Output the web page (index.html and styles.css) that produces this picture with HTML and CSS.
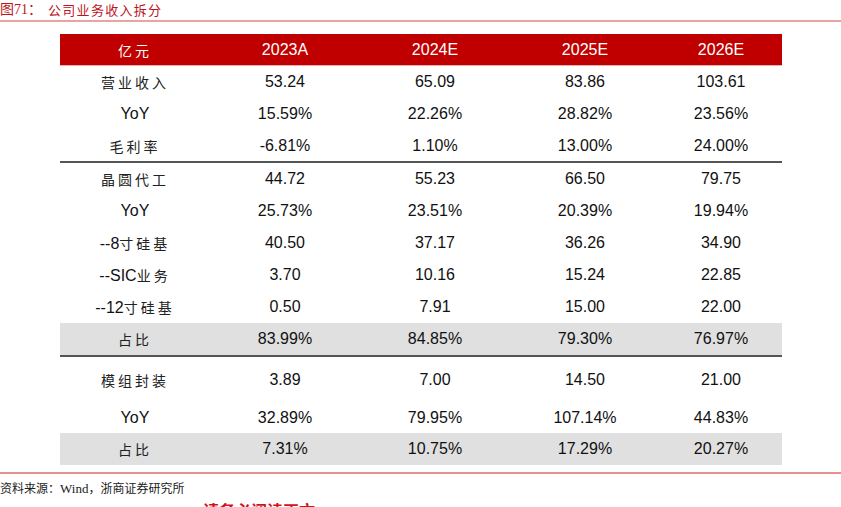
FILE: index.html
```html
<!DOCTYPE html>
<html lang="zh">
<head>
<meta charset="utf-8">
<link rel="stylesheet" href="styles.css">
</head>
<body>
<div class="page">
  <div class="title"><span class="fig">图71：</span><span class="caption">公司业务收入拆分</span></div>
  <div class="wrap">
    <table class="data">
      <thead>
        <tr><th class="cn">亿元</th><th>2023A</th><th>2024E</th><th>2025E</th><th>2026E</th></tr>
      </thead>
      <tbody>
        <tr class="first"><td class="cn">营业收入</td><td>53.24</td><td>65.09</td><td>83.86</td><td>103.61</td></tr>
        <tr><td>YoY</td><td>15.59%</td><td>22.26%</td><td>28.82%</td><td>23.56%</td></tr>
        <tr class="end top-end"><td class="cn">毛利率</td><td>-6.81%</td><td>1.10%</td><td>13.00%</td><td>24.00%</td></tr>
        <tr><td class="cn">晶圆代工</td><td>44.72</td><td>55.23</td><td>66.50</td><td>79.75</td></tr>
        <tr><td>YoY</td><td>25.73%</td><td>23.51%</td><td>20.39%</td><td>19.94%</td></tr>
        <tr><td>--8<span class="cn">寸硅基</span></td><td>40.50</td><td>37.17</td><td>36.26</td><td>34.90</td></tr>
        <tr><td>--SIC<span class="cn">业务</span></td><td>3.70</td><td>10.16</td><td>15.24</td><td>22.85</td></tr>
        <tr><td>--12<span class="cn">寸硅基</span></td><td>0.50</td><td>7.91</td><td>15.00</td><td>22.00</td></tr>
        <tr class="shade end"><td class="cn">占比</td><td>83.99%</td><td>84.85%</td><td>79.30%</td><td>76.97%</td></tr>
        <tr class="tall"><td class="cn">模组封装</td><td>3.89</td><td>7.00</td><td>14.50</td><td>21.00</td></tr>
        <tr class="mid"><td>YoY</td><td>32.89%</td><td>79.95%</td><td>107.14%</td><td>44.83%</td></tr>
        <tr class="shade"><td class="cn">占比</td><td>7.31%</td><td>10.75%</td><td>17.29%</td><td>20.27%</td></tr>
      </tbody>
    </table>
  </div>
  <div class="source">资料来源：<span class="latin">Wind</span>，浙商证券研究所</div>
  <div class="footer">请务必阅读正文</div>
</div>
</body>
</html>
```

FILE: styles.css
```css
html, body {
  margin: 0;
  padding: 0;
  background: #ffffff;
}
.page {
  width: 841px;
  height: 507px;
  overflow: hidden;
  font-family: "Liberation Sans", Arial, sans-serif;
  color: #111111;
}
.title {
  height: 20px;
  border-bottom: 2px solid #e8a3a3;
  display: flex;
  align-items: center;
  font-family: "Liberation Serif", "Noto Sans CJK SC", serif;
  color: #c0141c;
  font-size: 14px;
  line-height: 16px;
}
.title .fig {
  width: 48px;
}
.title .caption {
  font-family: "Noto Sans CJK SC", sans-serif;
  font-size: 13px;
  letter-spacing: 1.3px;
}
.wrap {
  padding: 12px 59px 0 60px;
}
.data {
  width: 722px;
  border-collapse: collapse;
  table-layout: fixed;
  font-size: 16px;
}
.data th, .data td {
  text-align: center;
  padding: 0;
  width: 150px;
}
.data th:last-child, .data td:last-child {
  width: 122px;
}
.data thead th {
  background: #c00000;
  color: #ffffff;
  font-weight: normal;
  height: 31px;
  border-bottom: 1px solid #eab0b0;
}
.data td {
  height: 32px;
}
.cn {
  font-family: "Noto Sans CJK SC", sans-serif;
  font-size: 14px;
  letter-spacing: 3px;
  color: #222222;
}
.data th.cn {
  color: #ffffff;
}
.data tr.end td {
  border-bottom: 2px solid #555555;
}
.data tr.top-end td {
  height: 31px;
}
.data tr.shade td {
  background: #e0e0e0;
}
.data tr.tall td {
  height: 45px;
}
.data tr.mid td {
  height: 31px;
}
.source {
  margin-top: 7px;
  border-top: 2px solid #e88f8f;
  padding-top: 6px;
  font-family: "Noto Sans CJK SC", sans-serif;
  font-size: 12px;
  line-height: 16px;
  color: #222222;
}
.source .latin {
  font-family: "Liberation Serif", serif;
  font-size: 13px;
}
.footer {
  margin-top: 3px;
  padding-left: 203px;
  font-family: "Noto Sans CJK SC", sans-serif;
  font-weight: bold;
  font-size: 16px;
  line-height: 20px;
  color: #d0101a;
}
```
